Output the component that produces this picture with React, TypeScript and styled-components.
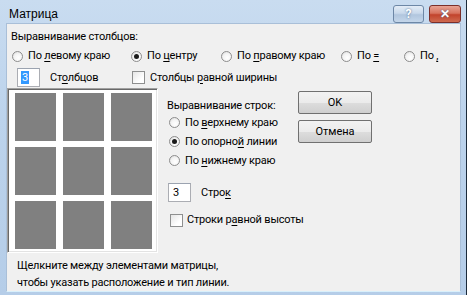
import styled, { createGlobalStyle } from "styled-components";

const Global = createGlobalStyle`
  html, body { margin: 0; padding: 0; background: #000; }
  body {
    font-family: Roboto, "Liberation Sans", Arial, sans-serif;
    font-size: 11px;
    letter-spacing: -0.2px;
    color: #000;
  }
`;

const Window = styled.div`
  width: 467px;
  height: 295px;
  box-sizing: border-box;
  display: flex;
  flex-direction: column;
  background: linear-gradient(180deg, #c9dcf0 0%, #bcd3ec 40%, #b5cde8 100%);
  border-right: 1px solid #1b2a3a;
  padding: 0 5px 6px 6px;
`;

const TitleBar = styled.div`
  height: 29px;
  display: flex;
  align-items: flex-start;
  justify-content: space-between;
`;

const Title = styled.div`
  padding: 7px 0 0 3px;
  font-family: "Liberation Sans", Arial, sans-serif;
  font-size: 12px;
  letter-spacing: 0;
`;

const TitleButtons = styled.div`
  display: flex;
  gap: 5px;
  padding-top: 5px;
`;

const CaptionButton = styled.div<{ $close?: boolean }>`
  width: ${(p) => (p.$close ? 32 : 31)}px;
  height: 18px;
  box-sizing: border-box;
  border: 1px solid ${(p) => (p.$close ? "#7b2f2a" : "#6d87a6")};
  border-radius: 3px;
  display: flex;
  align-items: center;
  justify-content: center;
  color: #fff;
  font-weight: bold;
  font-size: 12px;
  background: ${(p) =>
    p.$close
      ? "linear-gradient(180deg, #e8a394 0%, #d7735e 45%, #c2432c 55%, #cf6a4f 100%)"
      : "linear-gradient(180deg, #e3ecf6 0%, #c9d9eb 45%, #b1c6de 55%, #c4d6ea 100%)"};
  text-shadow: 0 0 2px #3a5d86;
`;

const Body = styled.div`
  flex: 1;
  background: #f0f0f0;
  border: 1px solid #a9bfd8;
  border-bottom-color: #d9f0fb;
  display: flex;
  flex-direction: column;
`;

const Heading = styled.div`
  margin: 6px 0 0 4px;
  line-height: 14px;
`;

const RadioRow = styled.div`
  display: flex;
  margin: 5px 0 0 5px;
  height: 14px;
`;

const Option = styled.label<{ $w?: number }>`
  display: flex;
  align-items: center;
  gap: 5px;
  width: ${(p) => (p.$w ? `${p.$w}px` : "auto")};
  flex-shrink: 0;
  line-height: 14px;
  white-space: nowrap;
`;

const Radio = styled.span<{ $on?: boolean }>`
  width: 11px;
  height: 11px;
  box-sizing: border-box;
  border-radius: 50%;
  border: 1px solid #8d8d8d;
  background: radial-gradient(circle at 60% 65%, #ffffff 0%, #f4f4f4 50%, #d6d6d6 100%);
  position: relative;
  flex-shrink: 0;
  &::after {
    content: "";
    display: ${(p) => (p.$on ? "block" : "none")};
    position: absolute;
    left: 2px;
    top: 2px;
    width: 5px;
    height: 5px;
    border-radius: 50%;
    background: #1a1a1a;
  }
`;

const Check = styled.span`
  width: 13px;
  height: 13px;
  box-sizing: border-box;
  border: 1px solid #8e8f8f;
  background: linear-gradient(135deg, #e5e5e5 0%, #ffffff 70%);
  flex-shrink: 0;
`;

const Key = styled.span`
  text-decoration: underline;
  text-underline-offset: 2px;
`;

const CountRow = styled.div`
  display: flex;
  align-items: center;
  margin: 5px 0 0 10px;
  height: 19px;
`;

const Field = styled.div<{ $selected?: boolean }>`
  width: 23px;
  height: 19px;
  box-sizing: border-box;
  border: 1px solid #abadb3;
  border-top-color: #9ba3b0;
  background: #fff;
  padding: 2px 0 0 3px;
  line-height: 13px;
  span {
    display: inline-block;
    padding: 0 1px;
    background: ${(p) => (p.$selected ? "#3399ff" : "transparent")};
    color: ${(p) => (p.$selected ? "#fff" : "#000")};
  }
`;

const CountLabel = styled.span<{ $w: number }>`
  margin-left: 10px;
  width: ${(p) => p.$w}px;
`;

const Main = styled.div`
  display: flex;
  margin-top: 1px;
  height: 165px;
`;

const Preview = styled.div`
  width: 151px;
  height: 165px;
  box-sizing: border-box;
  border: 1px solid #a0a0a0;
  border-right-color: #fff;
  border-bottom-color: #fff;
  box-shadow: inset 1px 1px 0 #696969, inset -1px -1px 0 #e3e3e3;
  background: #fff;
  display: grid;
  grid-template-columns: repeat(3, 41px);
  grid-template-rows: repeat(3, 48px);
  column-gap: 7px;
  row-gap: 6px;
  padding: 4px 0 0 7px;
`;

const Cell = styled.div`
  background: #808080;
`;

const RowsColumn = styled.div`
  display: flex;
  flex-direction: column;
  margin-left: 9px;
  width: 131px;
`;

const RowsHeading = styled.div`
  margin: 11px 0 -2px;
  line-height: 14px;
`;

const RowOption = styled(Option)`
  margin: 4px 0 0 2px;
  height: 15px;
`;

const RowsCount = styled.div`
  display: flex;
  align-items: center;
  margin: 15px 0 0 1px;
`;

const RowsCheck = styled(Option)`
  margin: 11px 0 0 3px;
  gap: 4px;
`;

const Buttons = styled.div`
  display: flex;
  flex-direction: column;
  gap: 6px;
  margin-top: 3px;
`;

const Button = styled.button`
  width: 74px;
  height: 23px;
  box-sizing: border-box;
  border: 1px solid #707070;
  border-radius: 2px;
  background: linear-gradient(180deg, #f2f2f2 0%, #ebebeb 50%, #dddddd 51%, #cfcfcf 100%);
  font: inherit;
  color: #000;
  padding: 0;
`;

const Footer = styled.div`
  margin: 4px 0 0 10px;
  line-height: 17px;
`;

export default function App() {
  return (
    <>
      <Global />
      <Window>
        <TitleBar>
          <Title>Матрица</Title>
          <TitleButtons>
            <CaptionButton>?</CaptionButton>
            <CaptionButton $close>✕</CaptionButton>
          </TitleButtons>
        </TitleBar>
        <Body>
          <Heading>Выравнивание столбцов:</Heading>
          <RadioRow>
            <Option $w={119}>
              <Radio />
              <span>По <Key>л</Key>евому краю</span>
            </Option>
            <Option $w={90}>
              <Radio $on />
              <span>По <Key>ц</Key>ентру</span>
            </Option>
            <Option $w={120}>
              <Radio />
              <span>По <Key>п</Key>равому краю</span>
            </Option>
            <Option $w={63}>
              <Radio />
              <span>По <Key>=</Key></span>
            </Option>
            <Option>
              <Radio />
              <span>По <Key>,</Key></span>
            </Option>
          </RadioRow>
          <CountRow>
            <Field $selected>
              <span>3</span>
            </Field>
            <CountLabel $w={82}>
              Ст<Key>о</Key>лбцов
            </CountLabel>
            <Option>
              <Check />
              <span>Столбцы <Key>р</Key>авной ширины</span>
            </Option>
          </CountRow>
          <Main>
            <Preview>
              {Array.from({ length: 9 }).map((_, i) => (
                <Cell key={i} />
              ))}
            </Preview>
            <RowsColumn>
              <RowsHeading>Выравнивание строк:</RowsHeading>
              <RowOption>
                <Radio />
                <span>По <Key>в</Key>ерхнему краю</span>
              </RowOption>
              <RowOption>
                <Radio $on />
                <span>По опорно<Key>й</Key> линии</span>
              </RowOption>
              <RowOption>
                <Radio />
                <span>По <Key>н</Key>ижнему краю</span>
              </RowOption>
              <RowsCount>
                <Field>
                  <span>3</span>
                </Field>
                <CountLabel $w={60}>
                  Стро<Key>к</Key>
                </CountLabel>
              </RowsCount>
              <RowsCheck>
                <Check />
                <span>Строки р<Key>а</Key>вной высоты</span>
              </RowsCheck>
            </RowsColumn>
            <Buttons>
              <Button>OK</Button>
              <Button>Отмена</Button>
            </Buttons>
          </Main>
          <Footer>
            Щелкните между элементами матрицы,
            <br />
            чтобы указать расположение и тип линии.
          </Footer>
        </Body>
      </Window>
    </>
  );
}
